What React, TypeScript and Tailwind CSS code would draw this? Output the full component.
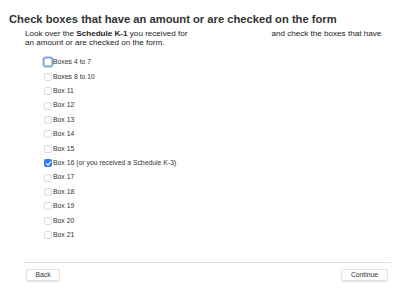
import React from "react";

const boxes = [
  "Boxes 4 to 7",
  "Boxes 8 to 10",
  "Box 11",
  "Box 12",
  "Box 13",
  "Box 14",
  "Box 15",
  "Box 16 (or you received a Schedule K-3)",
  "Box 17",
  "Box 18",
  "Box 19",
  "Box 20",
  "Box 21",
];

function Check({ checked, focused }: { checked?: boolean; focused?: boolean }) {
  if (checked) {
    return (
      <span className="flex h-[8px] w-[8px] items-center justify-center rounded-[2px] bg-[#2f7cf6]">
        <svg viewBox="0 0 10 10" className="h-[7px] w-[7px]">
          <path d="M2 5.2 L4.2 7.4 L8.2 2.6" fill="none" stroke="white" strokeWidth="1.6" strokeLinecap="round" strokeLinejoin="round" />
        </svg>
      </span>
    );
  }
  return (
    <span
      className={
        focused
          ? "h-[8px] w-[8px] rounded-[2px] border border-[#c9c9c9] bg-white shadow-[0_0_0_1.5px_#7aa7f0]"
          : "h-[8px] w-[8px] rounded-[2px] border border-[#dcdcdc] bg-white"
      }
    />
  );
}

export default function App() {
  return (
    <div className="h-[291px] w-[400px] bg-white pt-[12px] font-['Liberation_Sans',sans-serif] text-[#222]">
      <h1 className="pl-[9px] text-[11.2px] font-bold leading-[14px] text-[#333]">
        Check boxes that have an amount or are checked on the form
      </h1>
      <p className="ml-[25px] mt-[4px] text-[8.1px] leading-[8.6px] text-[#222]">
        Look over the <span className="font-bold">Schedule K-1</span> you received for
        <span className="inline-block w-[84px]" />
        and check the boxes that have
        <br />
        an amount or are checked on the form.
      </p>
      <ul className="ml-[44px] mt-[8px]">
        {boxes.map((b, i) => (
          <li key={b} className="flex h-[14.4px] items-center">
            <Check checked={i === 7} focused={i === 0} />
            <span className="ml-[1px] text-[6.85px] text-[#333]">{b}</span>
          </li>
        ))}
      </ul>
      <div className="ml-[24px] mr-[9px] mt-[20px] border-t-[1.5px] border-[#dedede]" />
      <div className="ml-[26px] mr-[12px] mt-[6px] flex justify-between">
        <button className="h-[12px] w-[34px] rounded-[3px] border border-[#e2e2e2] bg-white text-[6.8px] text-[#333] shadow-[0_0.5px_1px_rgba(0,0,0,0.12)]">
          Back
        </button>
        <button className="h-[12px] w-[47px] rounded-[3px] border border-[#e2e2e2] bg-white text-[6.8px] text-[#333] shadow-[0_0.5px_1px_rgba(0,0,0,0.12)]">
          Continue
        </button>
      </div>
    </div>
  );
}
